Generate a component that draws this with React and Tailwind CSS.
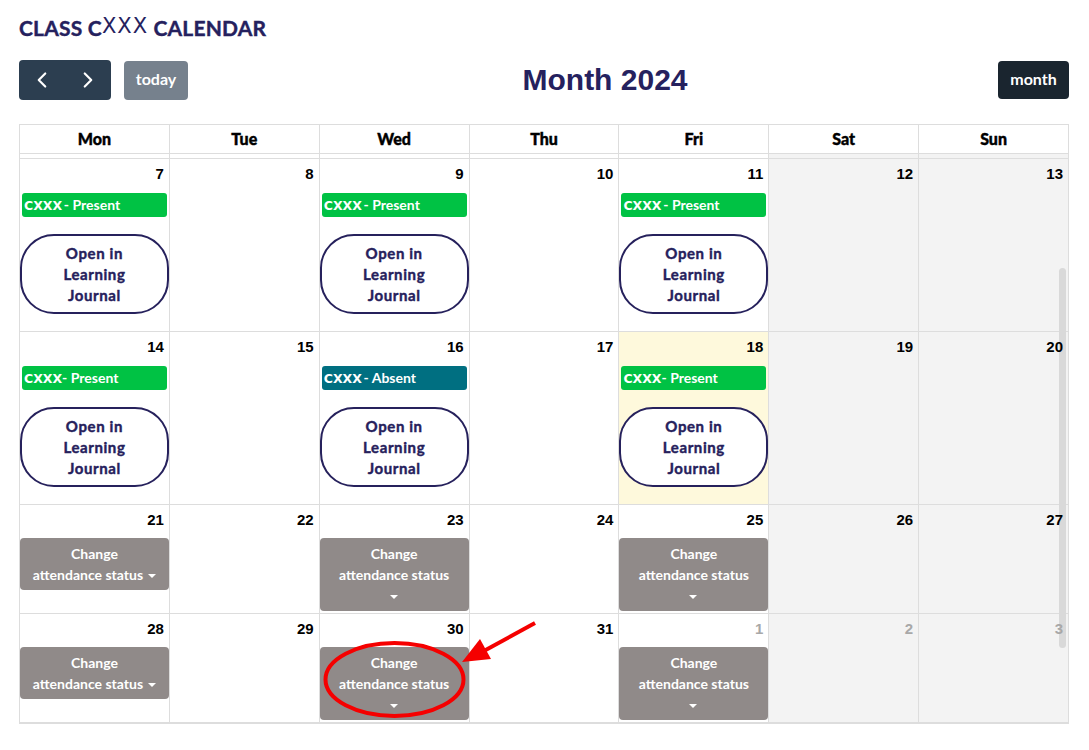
import React from 'react';
import { ChevronLeft, ChevronRight } from 'lucide-react';

const rows = [
  [
    { d: 7, ev: 'present' }, { d: 8 }, { d: 9, ev: 'present' }, { d: 10 },
    { d: 11, ev: 'present' }, { d: 12, we: true }, { d: 13, we: true },
  ],
  [
    { d: 14, ev: 'present', tight: true }, { d: 15 }, { d: 16, ev: 'absent' }, { d: 17 },
    { d: 18, ev: 'present', tight: true, today: true }, { d: 19, we: true }, { d: 20, we: true },
  ],
  [
    { d: 21, change: 'inline' }, { d: 22 }, { d: 23, change: 'wrap' }, { d: 24 },
    { d: 25, change: 'wrap' }, { d: 26, we: true }, { d: 27, we: true },
  ],
  [
    { d: 28, change: 'inline' }, { d: 29 }, { d: 30, change: 'wrap' }, { d: 31 },
    { d: 1, change: 'wrap', other: true }, { d: 2, we: true, other: true }, { d: 3, we: true, other: true },
  ],
];

const days = ['Mon', 'Tue', 'Wed', 'Thu', 'Fri', 'Sat', 'Sun'];

function Caret() {
  return <span className="inline-block align-middle ml-[5px] w-0 h-0 border-l-[4px] border-r-[4px] border-t-[4px] border-l-transparent border-r-transparent border-t-white" />;
}

function EventBar({ kind, tight }) {
  const bg = kind === 'absent' ? 'bg-[#006f81]' : 'bg-[#00c244]';
  return (
    <div className={`${bg} mt-[1px] mx-[2px] h-[24px] rounded-[3px] flex items-baseline pt-[3px] pl-[2px] text-white whitespace-nowrap leading-[18px]`}>
      <span className="text-[12.5px] font-bold" style={{ fontFamily: "'DejaVu Sans', sans-serif" }}>CXXX</span>
      <span className="text-[14px] font-bold">{tight ? '' : '\u2009'}- {kind === 'absent' ? 'Absent' : 'Present'}</span>
    </div>
  );
}

function JournalButton() {
  return (
    <div className="mt-[17px] h-[80px] bg-white border-2 border-[#26215c] rounded-[34px] flex items-center justify-center text-center text-[15px] font-bold leading-[21px] tracking-[0.04em] text-[#26215c] [-webkit-text-stroke:0.4px_#26215c]">
      Open in<br />Learning<br />Journal
    </div>
  );
}

function ChangeButton({ mode }) {
  return (
    <div className="bg-[#908a89] rounded-[4px] py-[5px] text-center text-white text-[14px] font-bold leading-[21px]">
      Change<br />
      attendance status
      {mode === 'inline' ? <Caret /> : (<><br /><span className="relative -left-[3px]"><Caret /></span></>)}
    </div>
  );
}

function Cell({ c, h }) {
  let bg = 'bg-white';
  if (c.we) bg = 'bg-[#f3f3f3]';
  if (c.today) bg = 'bg-[#fef9dc]';
  return (
    <div className={`${bg} ${h} border-r border-[#dddddd] flex flex-col`}>
      <div className={`relative z-10 h-[33px] pt-[5px] pr-[5px] text-right text-[15px] font-bold leading-[20px] ${c.other ? 'text-[#a8a8a8]' : 'text-black'}`} style={{ fontFamily: "'Liberation Sans', Arial, sans-serif" }}>
        {c.d}
      </div>
      {c.ev && (
        <>
          <EventBar kind={c.ev} tight={c.tight} />
          <JournalButton />
        </>
      )}
      {c.change && <ChangeButton mode={c.change} />}
    </div>
  );
}

export default function App() {
  return (
    <div className="relative min-h-screen bg-white px-[19px] pt-[14px]" style={{ fontFamily: "Lato, 'Open Sans', sans-serif" }}>
      <h1 className="h-[28px] text-[21px] font-bold leading-[28px] text-[#25215e] tracking-[0.01em] [-webkit-text-stroke:0.4px_#25215e]">
        CLASS C<span className="relative -top-[3px] text-[21px] font-normal tracking-[1px] [-webkit-text-stroke:0px]" style={{ fontFamily: "'DejaVu Sans', sans-serif" }}>XXX</span> CALENDAR
      </h1>

      {/* toolbar */}
      <div className="mt-[18px] w-[1050px] flex items-center justify-between">
        <div className="flex items-center">
          <div className="flex h-[40px] bg-[#2c3e50] rounded-[4px]">
            <button className="w-[46px] flex items-center justify-center text-white">
              <ChevronLeft size={26} strokeWidth={2} />
            </button>
            <button className="w-[46px] flex items-center justify-center text-white">
              <ChevronRight size={26} strokeWidth={2} />
            </button>
          </div>
          <button className="ml-[13px] h-[39px] w-[64px] bg-[#76818d] rounded-[4px] pb-[3px] text-white text-[16px] font-bold">
            today
          </button>
        </div>
        <h2 className="ml-[24px] text-[30px] font-bold text-[#25215e] leading-none" style={{ fontFamily: "'Liberation Sans', Arial, sans-serif" }}>
          Month 2024
        </h2>
        <button className="h-[38px] w-[71px] bg-[#1a252f] rounded-[4px] pb-[2px] text-white text-[16px] font-bold">
          month
        </button>
      </div>

      {/* calendar */}
      <div className="mt-[24px] w-[1050px] border-l border-[#dddddd]">
        <div className="grid grid-cols-7 border-t border-b border-[#dddddd]">
          {days.map((d) => (
            <div key={d} className="h-[28px] border-r border-[#dddddd] flex items-center justify-center pb-[1px] text-[16px] font-black text-black [-webkit-text-stroke:0.4px_#000]">
              {d}
            </div>
          ))}
        </div>
        <div className="relative">
          <div className="grid grid-cols-7">
            {days.map((d, i) => (
              <div key={d} className={`h-[4px] border-r border-[#dddddd] ${i > 4 ? 'bg-[#f3f3f3]' : 'bg-white'}`} />
            ))}
          </div>
          {rows.map((r, ri) => (
            <div key={ri} className={`grid grid-cols-7 border-t border-[#dddddd] ${ri === 3 ? 'border-b-2' : ''}`}>
              {r.map((c, ci) => (
                <Cell key={ci} c={c} h={ri < 2 ? 'h-[172px]' : 'h-[108px]'} />
              ))}
            </div>
          ))}
          <div className="absolute right-[3px] top-[114px] w-[7px] h-[380px] rounded-full bg-[#d9d9d9]" />
        </div>
      </div>

      {/* annotation */}
      <svg className="absolute left-0 top-0 pointer-events-none" width="1089" height="750" viewBox="0 0 1089 750">
        <ellipse cx="394.5" cy="679.5" rx="69" ry="36.5" fill="none" stroke="#f50000" strokeWidth="4" />
        <line x1="535" y1="623" x2="482" y2="652" stroke="#f50000" strokeWidth="4" />
        <polygon points="462,662 480,639 491,659" fill="#f50000" />
      </svg>
    </div>
  );
}
